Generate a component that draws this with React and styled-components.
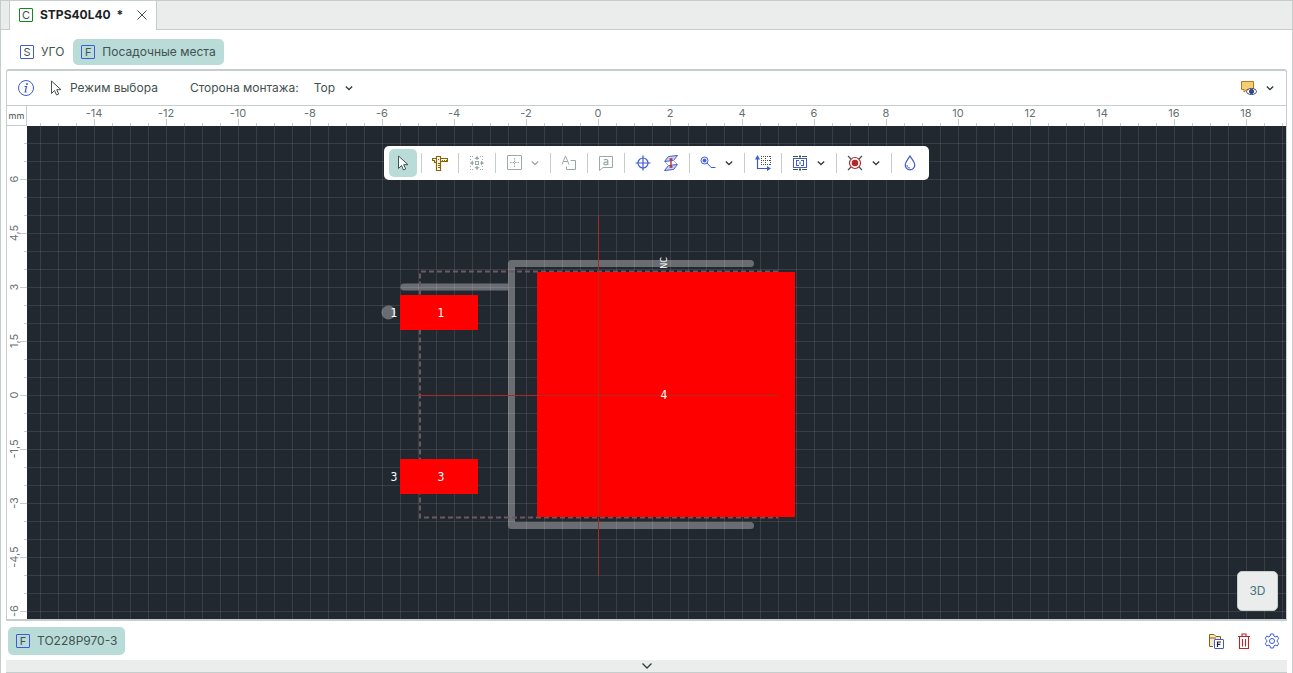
import React, { useLayoutEffect, useRef, useState } from "react";
import styled, { createGlobalStyle } from "styled-components";

const line = "#c3cecd";
const blue = "#3f5bd0";
const grey = "#9aa9a7";
const dark = "#425250";
const mint = "#b9dcd8";

const STEP = 18;
const ORIGIN_X = 571;
const ORIGIN_Y = 269;

const Global = createGlobalStyle`
  *, *::before, *::after { box-sizing: border-box; }
  html, body, #root { height: 100%; }
  body {
    margin: 0;
    background: #fff;
    color: ${dark};
    font: 12px/16px Inter, "Noto Sans", sans-serif;
  }
  button, select { font: inherit; color: inherit; }
  button { border: 0; background: none; padding: 0; cursor: pointer; }
  svg { display: block; flex: none; }
`;

const Window = styled.div`
  height: 100%;
  min-height: 400px;
  display: flex;
  flex-direction: column;
  border: 1px solid ${line};
  border-bottom: 0;
  overflow: hidden;
`;

const TabBar = styled.nav`
  display: flex;
  flex: none;
  height: 29px;
  padding-left: 8px;
  background: #ebedec;
  border-bottom: 1px solid ${line};
`;

const DocTab = styled.div`
  display: flex;
  align-items: center;
  gap: 7px;
  height: 29px;
  width: 148px;
  padding: 0 8px 1px 9px;
  background: #fff;
  border: solid ${line};
  border-width: 0 1px;
  color: #1d2423;
  font-weight: 700;
  white-space: pre;
`;

const DocName = styled.span`
  flex: 1;
`;

const Row = styled.div`
  display: flex;
  align-items: center;
  flex: none;
  gap: ${(p) => p.$gap || 0}px;
  height: ${(p) => p.$height}px;
  padding: ${(p) => p.$pad || "0"};
`;

const Spacer = styled.span`
  flex: 1;
`;

const Letter = styled.span`
  display: grid;
  place-items: center;
  flex: none;
  width: 14px;
  height: 14px;
  border: 1px solid ${(p) => p.$color || blue};
  border-radius: 1px;
  font-size: 11px;
  line-height: 12px;
  font-weight: 400;
  color: ${dark};
`;

const Pill = styled.button`
  display: flex;
  align-items: center;
  gap: 7px;
  height: ${(p) => p.$height || 26}px;
  padding: 0 8px;
  border-radius: 5px;
  background: ${(p) => (p.$active ? mint : "transparent")};
`;

const Editor = styled.main`
  display: flex;
  flex-direction: column;
  flex: 1;
  min-height: 0;
  margin: 0 5px;
  border: solid ${line};
  border-width: 2px 1px;
  border-radius: 3px 3px 0 0;
`;

const Select = styled.select`
  appearance: none;
  border: 0;
  background: none;
  padding: 0;
  width: 30px;
`;

const Board = styled.div`
  flex: 1;
  min-height: 0;
  display: grid;
  grid-template: 20px minmax(0, 1fr) / 20px minmax(0, 1fr);
  border-top: 1px solid ${line};
`;

const Unit = styled.div`
  border: solid ${line};
  border-width: 0 1px 1px 0;
  font-size: 9px;
  line-height: 20px;
  text-align: center;
`;

const Ruler = styled.svg`
  width: 100%;
  height: 100%;
  overflow: hidden;
  stroke: ${line};
  text {
    stroke: none;
    fill: #66706f;
    font-size: 11px;
    text-anchor: middle;
  }
`;

const Field = styled.div`
  position: relative;
  overflow: hidden;
  background: #222830;
`;

const Drawing = styled.svg`
  width: 100%;
  height: 100%;
  text {
    fill: #fff;
    font-size: 12px;
    text-anchor: middle;
    font-family: "DejaVu Sans Condensed", sans-serif;
  }
  text.small {
    font-size: 9px;
  }
`;

const Tools = styled.div`
  position: absolute;
  top: 20px;
  left: 0;
  right: 0;
  margin: 0 auto;
  display: flex;
  align-items: center;
  width: 545px;
  height: 34px;
  padding: 0 5px;
  border-radius: 5px;
  background: #fff;
`;

const Tool = styled.button`
  display: grid;
  place-items: center;
  width: 28px;
  height: 28px;
  border-radius: 5px;
  background: ${(p) => (p.$active ? mint : "none")};
`;

const More = styled.button`
  display: grid;
  place-items: center;
  width: 18px;
  height: 28px;
  padding-right: 4px;
`;

const Divider = styled.span`
  flex: none;
  width: 1px;
  height: 20px;
  margin: 0 4px;
  background: ${line};
`;

const View3D = styled.button`
  position: absolute;
  right: 8px;
  bottom: 8px;
  width: 41px;
  height: 40px;
  border: 1px solid ${line};
  border-radius: 5px;
  background: #ebedec;
  color: #3d7480;
`;

const Collapse = styled.button`
  display: grid;
  place-items: center;
  flex: none;
  height: 13px;
  margin: 0 5px;
  background: #ebedec;
  border-bottom: 1px solid ${line};
`;

const Icon = ({ size = 16, color = blue, children }) => (
  <svg width={size} height={size} viewBox={`0 0 ${size} ${size}`} fill="none" stroke={color} aria-hidden="true">
    {children}
  </svg>
);

const Chevron = ({ color = "#2f3d3b", wide }) => (
  <svg width="10" height="8" viewBox="0 0 10 8" fill="none" stroke={color} strokeWidth="1.3" aria-hidden="true">
    <path d={wide ? "M0.5 1.5 5 6 9.5 1.5" : "M1.8 2.5 5 5.5 8.2 2.5"} />
  </svg>
);

const Cursor = () => (
  <Icon color={dark}>
    <path d="M3.5 1v12.5l3-3 2 4.5 2.2-1-2-4.3H13Z" fill="#fff" strokeLinejoin="round" />
  </Icon>
);

const Caliper = () => (
  <Icon color="#8a6400">
    <path d="M4.5 1.5h4v14h-4zM4.500 3.500h-4v2h2v2h2M8.500 3.500h7v3h-7M8.500 4.500V3.500" strokeWidth="1.2" />
    <path d="M6 8.500h2M6 10.500h2M6 12.500h2M10.500 5v1.500M12.500 5v1.500M14.500 5v1.500M6 4.500h1" />
  </Icon>
);

const MoveGrid = () => (
  <Icon color={grey}>
    <path d="M1 1.500h4M11 1.500h4M1 14.500h4M11 14.500h4M1 4.500h2M13 4.500h2M1 11.500h2M13 11.500h2" strokeDasharray="1 1" />
    <path d="M8 2v3M8 11v3M2 8h3M11 8h3" strokeWidth="1.2" />
    <path d="M5.500 4 8 1l2.500 3ZM5.500 12 8 15l2.500-3ZM4 5.500 1 8l3 2.500ZM12 5.500 15 8l-3 2.500Z" fill={grey} stroke="none" />
    <rect x="6.5" y="6.5" width="3" height="3" />
  </Icon>
);

const AddFrame = () => (
  <Icon color={grey}>
    <rect x="1.5" y="0.5" width="14" height="14" rx="0.5" />
    <path d="M8.5 3v9M4 7.5h9" strokeDasharray="1.5 1" />
  </Icon>
);

const TextShape = () => (
  <Icon color={grey}>
    <path d="M1 9.5 4.5 1 8 9.5M2.3 6.5h4.5M9.5 5.500h5v9h-9v-3" />
  </Icon>
);

const Note = () => (
  <Icon color={grey}>
    <path d="M1.5 1.5h13v11H5l-3.5 3Z" strokeLinejoin="round" />
    <path d="M5.8 5c2-1 4-.5 4 1v4M9.8 7.3c-2-.3-4 0-4 1.4 0 1.6 3 1.500 4 0" strokeWidth="1.2" />
  </Icon>
);

const Target = () => (
  <Icon>
    <circle cx="8" cy="8" r="5" strokeWidth="1.2" />
    <path d="M8 .5v15M.5 8h15" strokeWidth="1.2" />
  </Icon>
);

const Layers = () => (
  <Icon>
    <path d="M5.500 1.500 14.500.5 10.500 5.500 1.500 6.500ZM5.500 10.500l9-1-4 5-9 1Z" fill="#cbd5f5" />
    <path d="m10.500 5.500 4 4M5.500 10.500l-4-4" stroke="#9eb0ea" />
    <path d="M8 4v8M6.500 4h3M6.500 12h3" stroke="#b3292b" strokeWidth="1.3" />
  </Icon>
);

const ViaTrack = () => (
  <Icon>
    <circle cx="4.500" cy="5.500" r="3.500" />
    <circle cx="4.500" cy="5.500" r="1.500" fill={blue} />
    <path d="m7 8 4 4.500h4.500" />
  </Icon>
);

const Axes = () => (
  <Icon>
    <path d="M6 1.500h10M6 9.500h10M6.500 1v10M15.500 1v10M10.500 1v10M6 5.500h10" stroke={dark} strokeDasharray="1 1" />
    <path d="M2.500 3v10.500H13" strokeWidth="1.200" />
    <path d="M0 4.500 2.500 0 5 4.500ZM12 11l4 2.500-4 2.500Z" fill={blue} stroke="none" />
  </Icon>
);

const Chip = () => (
  <Icon>
    <path d="M1 1.500h5M10 1.500h5M1 14.500h5M10 14.500h5M7 1.500h2M7 14.500h2M8 0v3M8 13v3M8 6.500v3" stroke={dark} />
    <rect x="1.500" y="3.500" width="13" height="9" />
    <path d="M4 5.500h3M9 5.500h3M4 10.500h3M9 10.500h3M4.500 6v4M11.500 6v4" />
  </Icon>
);

const PadIcon = () => (
  <Icon color="#b3292b">
    <path d="m1 1 3 3M15 1l-3 3M1 15l3-3M15 15l-3-3" stroke={dark} strokeWidth="1.2" />
    <circle cx="8" cy="8" r="5.500" strokeWidth="1.200" />
    <circle cx="8" cy="8" r="3.300" fill="#b3292b" stroke="none" />
  </Icon>
);

const Drop = () => (
  <Icon>
    <path d="M8 1c2 3.500 4.800 5.800 4.800 9a4.800 4.800 0 0 1-9.600 0C3.200 6.800 6 4.500 8 1Z" strokeWidth="1.2" />
    <path d="M5 10c0 2 1 3 3 3" />
  </Icon>
);

const Info = () => (
  <Icon>
    <circle cx="8" cy="8" r="7.500" />
    <path d="M6.500 6.500h2l-1.300 5.500h1.500" strokeWidth="1.200" />
    <circle cx="9" cy="4" r="1" fill={blue} stroke="none" />
  </Icon>
);

const NoteEye = () => (
  <Icon color="#b57a28">
    <path d="M.5 1.500h12v8H6L3 12V9.500H.5Z" fill="#f5cd73" />
    <ellipse cx="10.500" cy="11.500" rx="5" ry="3" fill="#fff" stroke="#36446f" />
    <circle cx="10.500" cy="11.500" r="2" fill="#33499b" stroke="#202b5b" />
  </Icon>
);

const FolderF = () => (
  <Icon color="#8a6400">
    <path d="M5 13.500H1.500v-12H6l2 2h4.500V6M1.500 5H8" fill="#f6e6d4" />
    <rect x="6.500" y="6.500" width="9" height="9" rx="0.500" fill="#fff" stroke={blue} />
    <path d="M9.500 14V9H13M9.500 11.300h2.800" stroke="#1d2423" strokeWidth="1.200" />
  </Icon>
);

const Trash = () => (
  <Icon color="#b3292b">
    <path d="M2 3.500h12M6 3V1h4v2M3.500 4v11.500h9V4M6.500 6v7.500M9.500 6v7.500" strokeWidth="1.100" />
  </Icon>
);

const Gear = () => (
  <Icon>
    <path d="M6.500 1h3l.5 2.200 1.200.7 2.100-.8 1.500 2.600-1.600 1.500v1.600l1.600 1.500-1.500 2.600-2.100-.8-1.200.7-.5 2.200h-3L6 12.800l-1.200-.7-2.100.8-1.500-2.600 1.600-1.500V7.200L1.200 5.700l1.500-2.600 2.100.8L6 3.200Z" strokeLinejoin="round" />
    <circle cx="8" cy="8" r="2.500" />
  </Icon>
);

const range = (from, to) => Array.from({ length: Math.max(0, to - from + 1) }, (_, i) => from + i);
const label = (n) => String(n).replace(".", ",");

/* Length in pixels of the scale along one side of the board. */
function useLength(side) {
  const ref = useRef(null);
  const [length, setLength] = useState(0);
  useLayoutEffect(() => {
    const read = () => setLength(ref.current.getBoundingClientRect()[side]);
    read();
    window.addEventListener("resize", read);
    return () => window.removeEventListener("resize", read);
  }, [side]);
  return [ref, length];
}

function TopRuler() {
  const [ref, length] = useLength("width");
  return (
    <Ruler ref={ref}>
      {range(-31, Math.floor((length - ORIGIN_X) / STEP)).map((n) => {
        const x = ORIGIN_X + n * STEP;
        const major = n % 4 === 0;
        return (
          <g key={n}>
            <path d={`M${x + 0.5} ${major ? 13 : 17}V20`} />
            {major && x < length - 10 && <text x={x} y="11">{label(n / 2)}</text>}
          </g>
        );
      })}
    </Ruler>
  );
}

function SideRuler() {
  const [ref, length] = useLength("height");
  return (
    <Ruler ref={ref}>
      {range(-14, Math.floor((length - ORIGIN_Y) / STEP)).map((n) => {
        const y = ORIGIN_Y + n * STEP;
        const major = n % 3 === 0;
        return (
          <g key={n}>
            <path d={`M${major ? 13 : 17} ${y + 0.5}H20`} />
            {major && y < length - 7 && <text transform={`translate(11 ${y}) rotate(-90)`}>{label(-n / 2)}</text>}
          </g>
        );
      })}
    </Ruler>
  );
}

function Footprint() {
  return (
    <Drawing role="img" aria-label="TO228P970-3">
      <defs>
        <pattern id="grid" x="13" y="17" width={STEP} height={STEP} patternUnits="userSpaceOnUse">
          <path d="M0.500 0V18M0 0.500H18" stroke="#fff" strokeOpacity="0.100" />
        </pattern>
      </defs>
      <rect width="100%" height="100%" fill="url(#grid)" />
      <g opacity="0.320" stroke="#fff" fill="none" strokeWidth="7" strokeLinecap="round" strokeLinejoin="round">
        <path d="M723.500 137.500H484.500V399.500H723.500M377 161H484" />
        <circle cx="361.500" cy="186.500" r="7" fill="#fff" stroke="none" />
      </g>
      <path d="M751 145.500H393V391.500H751" fill="none" stroke="#6a5963" strokeWidth="2" strokeDasharray="5 3" />
      <g fill="#f00">
        <rect x="373" y="169" width="78" height="35" />
        <rect x="373" y="333" width="78" height="35" />
        <rect x="510" y="146" width="258" height="245" />
      </g>
      <path d="M571.500 89V146M571.500 392V449M391 269.500H510" stroke="#a8282c" />
      <path d="M571.500 146V391M510 269.500H751" stroke="#a8301f" />
      <text x="414" y="191">1</text>
      <text x="367" y="191">1</text>
      <text x="414" y="355">3</text>
      <text x="367" y="355">3</text>
      <text x="637" y="273">4</text>
      <text className="small" transform="translate(640 137) rotate(-90)">NC</text>
    </Drawing>
  );
}

export default function App() {
  return (
    <Window>
      <Global />
      <TabBar>
        <DocTab>
          <Letter $color="#108a1c">C</Letter>
          <DocName>STPS40L40  *</DocName>
          <button aria-label="Закрыть">
            <svg width="12" height="12" viewBox="0 0 12 12" stroke={dark}><path d="m1.500 1.500 9 9M10.500 1.500l-9 9" /></svg>
          </button>
        </DocTab>
      </TabBar>
      <Row $height={39} $pad="4px 11px 0" $gap={1}>
        <Pill><Letter>S</Letter>УГО</Pill>
        <Pill $active><Letter>F</Letter>Посадочные места</Pill>
      </Row>
      <Editor>
        <Row $height={34} $pad="0 5px 0 11px">
          <Row as="button" $height={28} aria-label="Информация"><Info /></Row>
          <Row $height={28} $gap={6} $pad="0 32px 0 14px"><Cursor />Режим выбора</Row>
          <label htmlFor="side">Сторона монтажа:</label>
          <Row $height={28} $pad="0 0 0 15px">
            <Select id="side"><option>Top</option></Select>
            <Chevron />
          </Row>
          <Spacer />
          <Row $height={28} $gap={6}>
            <button aria-label="Показ комментариев"><NoteEye /></button>
            <More aria-label="Ещё"><Chevron /></More>
          </Row>
        </Row>
        <Board>
          <Unit>mm</Unit>
          <TopRuler />
          <SideRuler />
          <Field>
            <Footprint />
            <Tools>
              <Tool $active aria-label="Выбор"><Cursor /></Tool>
              <Divider />
              <Tool aria-label="Измерение"><Caliper /></Tool>
              <Divider />
              <Tool aria-label="Сетка"><MoveGrid /></Tool>
              <Divider />
              <Tool aria-label="Контур"><AddFrame /></Tool>
              <More aria-label="Виды контура"><Chevron color={grey} /></More>
              <Divider />
              <Tool aria-label="Текст"><TextShape /></Tool>
              <Divider />
              <Tool aria-label="Заметка"><Note /></Tool>
              <Divider />
              <Tool aria-label="Начало координат"><Target /></Tool>
              <Tool aria-label="Слои"><Layers /></Tool>
              <Divider />
              <Tool aria-label="Трек"><ViaTrack /></Tool>
              <More aria-label="Виды трека"><Chevron /></More>
              <Divider />
              <Tool aria-label="Оси"><Axes /></Tool>
              <Divider />
              <Tool aria-label="Корпус"><Chip /></Tool>
              <More aria-label="Виды корпуса"><Chevron /></More>
              <Divider />
              <Tool aria-label="Площадка"><PadIcon /></Tool>
              <More aria-label="Виды площадки"><Chevron /></More>
              <Divider />
              <Tool aria-label="Капля"><Drop /></Tool>
            </Tools>
            <View3D>3D</View3D>
          </Field>
        </Board>
      </Editor>
      <Row $height={39} $gap={12} $pad="0 12px 0 7px">
        <Pill $active $height={28}><Letter>F</Letter>TO228P970-3</Pill>
        <Spacer />
        <button aria-label="Добавить"><FolderF /></button>
        <button aria-label="Удалить"><Trash /></button>
        <button aria-label="Настройки"><Gear /></button>
      </Row>
      <Collapse aria-label="Развернуть"><Chevron wide /></Collapse>
    </Window>
  );
}
